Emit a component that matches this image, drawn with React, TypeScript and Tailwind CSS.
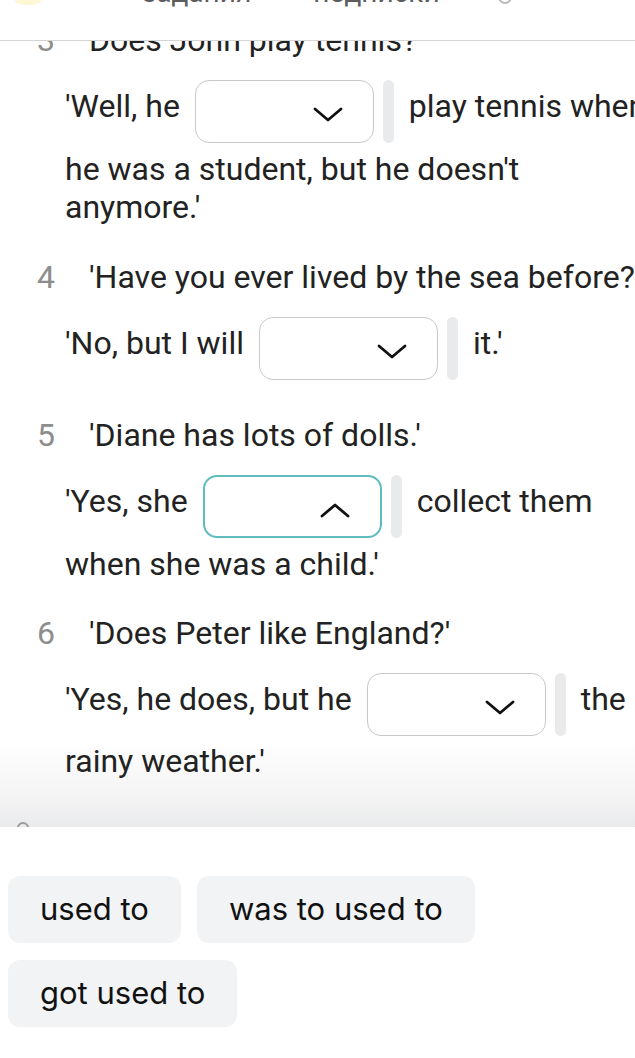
import React from "react";

function Chevron({ up }: { up?: boolean }) {
  return (
    <svg width="30" height="16" viewBox="0 0 30 16" fill="none" stroke="#111" strokeWidth="2.8" strokeLinecap="round" strokeLinejoin="round">
      {up ? <path d="M2 14 15 3l13 11" /> : <path d="M2 2l13 11L28 2" />}
    </svg>
  );
}

function Select({ open }: { open?: boolean }) {
  return (
    <div className="flex items-center gap-[9px] shrink-0">
      <div
        className={
          "flex h-[63px] w-[179px] items-center justify-end rounded-[14px] bg-white pr-[30px] pt-[6px] " +
          (open ? "border-2 border-[#5fbcbf]" : "border-[1.5px] border-[#c9c9c9]")
        }
      >
        <Chevron up={open} />
      </div>
      <div className="h-[63px] w-[11px] rounded-full bg-[#e8eaec]" />
    </div>
  );
}

function Question({ n, text, className = "" }: { n: number; text: string; className?: string }) {
  return (
    <div className={"flex h-[38px] items-center whitespace-nowrap " + className}>
      <span className="w-[55px] pl-[37px] text-[#8d8d8d]">{n}</span>
      <span className="pl-[34px]">{text}</span>
    </div>
  );
}

function AnswerRow({ before, after, open, className = "" }: { before: string; after: string; open?: boolean; className?: string }) {
  return (
    <div className={"flex items-center whitespace-nowrap pl-[65px] " + className}>
      <span className="mb-[12px] pr-[15px]">{before}</span>
      <Select open={open} />
      <span className="mb-[12px] pl-[15px]">{after}</span>
    </div>
  );
}

function Line({ children, className = "" }: { children: React.ReactNode; className?: string }) {
  return <div className={"h-[38px] whitespace-nowrap pl-[65px] leading-[38px] " + className}>{children}</div>;
}

const chips = ["used to", "was to used to", "got used to"];

export default function App() {
  return (
    <div className="flex h-[1058px] w-[635px] flex-col overflow-hidden bg-white font-['Roboto',sans-serif] text-[32px] text-[#222]">
      <header className="h-[41px] shrink-0 overflow-hidden border-b border-[#d4d4d4] bg-white">
        <div className="mt-[-22px] flex h-[30px] items-center text-[28px] leading-[30px] text-[#5c5c5c]">
          <div className="ml-[12px] h-[24px] w-[32px] rounded-full bg-[#fdf7d6]" />
          <span className="ml-[98px]">задания</span>
          <span className="ml-[62px]">подписки</span>
          <span className="ml-[58px] h-[22px] w-[14px] rounded-full border-2 border-[#bdbdbd]" />
        </div>
      </header>

      <main className="h-[786px] shrink-0 overflow-hidden bg-[linear-gradient(to_bottom,#ffffff_0px,#ffffff_700px,#f3f3f4_760px,#e9eaeb_786px)]">
        <Question n={3} text="Does John play tennis?" className="mt-[-20px]" />
        <AnswerRow before="'Well, he" after="play tennis when" className="mt-[21px]" />
        <Line className="mt-[7px]">he was a student, but he doesn't</Line>
        <Line>anymore.'</Line>

        <Question n={4} text="'Have you ever lived by the sea before?'" className="mt-[32px]" />
        <AnswerRow before="'No, but I will" after="it.'" className="mt-[21px]" />

        <Question n={5} text="'Diane has lots of dolls.'" className="mt-[36px]" />
        <AnswerRow before="'Yes, she" after="collect them" open className="mt-[21px]" />
        <Line className="mt-[7px]">when she was a child.'</Line>

        <Question n={6} text="'Does Peter like England?'" className="mt-[31px]" />
        <AnswerRow before="'Yes, he does, but he" after="the" className="mt-[21px]" />
        <Line className="mt-[6px]">rainy weather.'</Line>

        <div className="ml-[17px] mt-[42px] h-[14px] w-[12px] rounded-full border-2 border-[#9a9a9a]" />
      </main>

      <section className="flex flex-1 flex-wrap content-start gap-x-[16px] gap-y-[17px] bg-white pl-[8px] pr-[8px] pt-[49px] font-['Inter',sans-serif] text-[31px] text-[#111]">
        {chips.map((c) => (
          <div key={c} className="flex h-[67px] items-center rounded-[12px] bg-[#f2f3f5] px-[32px]">
            {c}
          </div>
        ))}
      </section>
    </div>
  );
}
